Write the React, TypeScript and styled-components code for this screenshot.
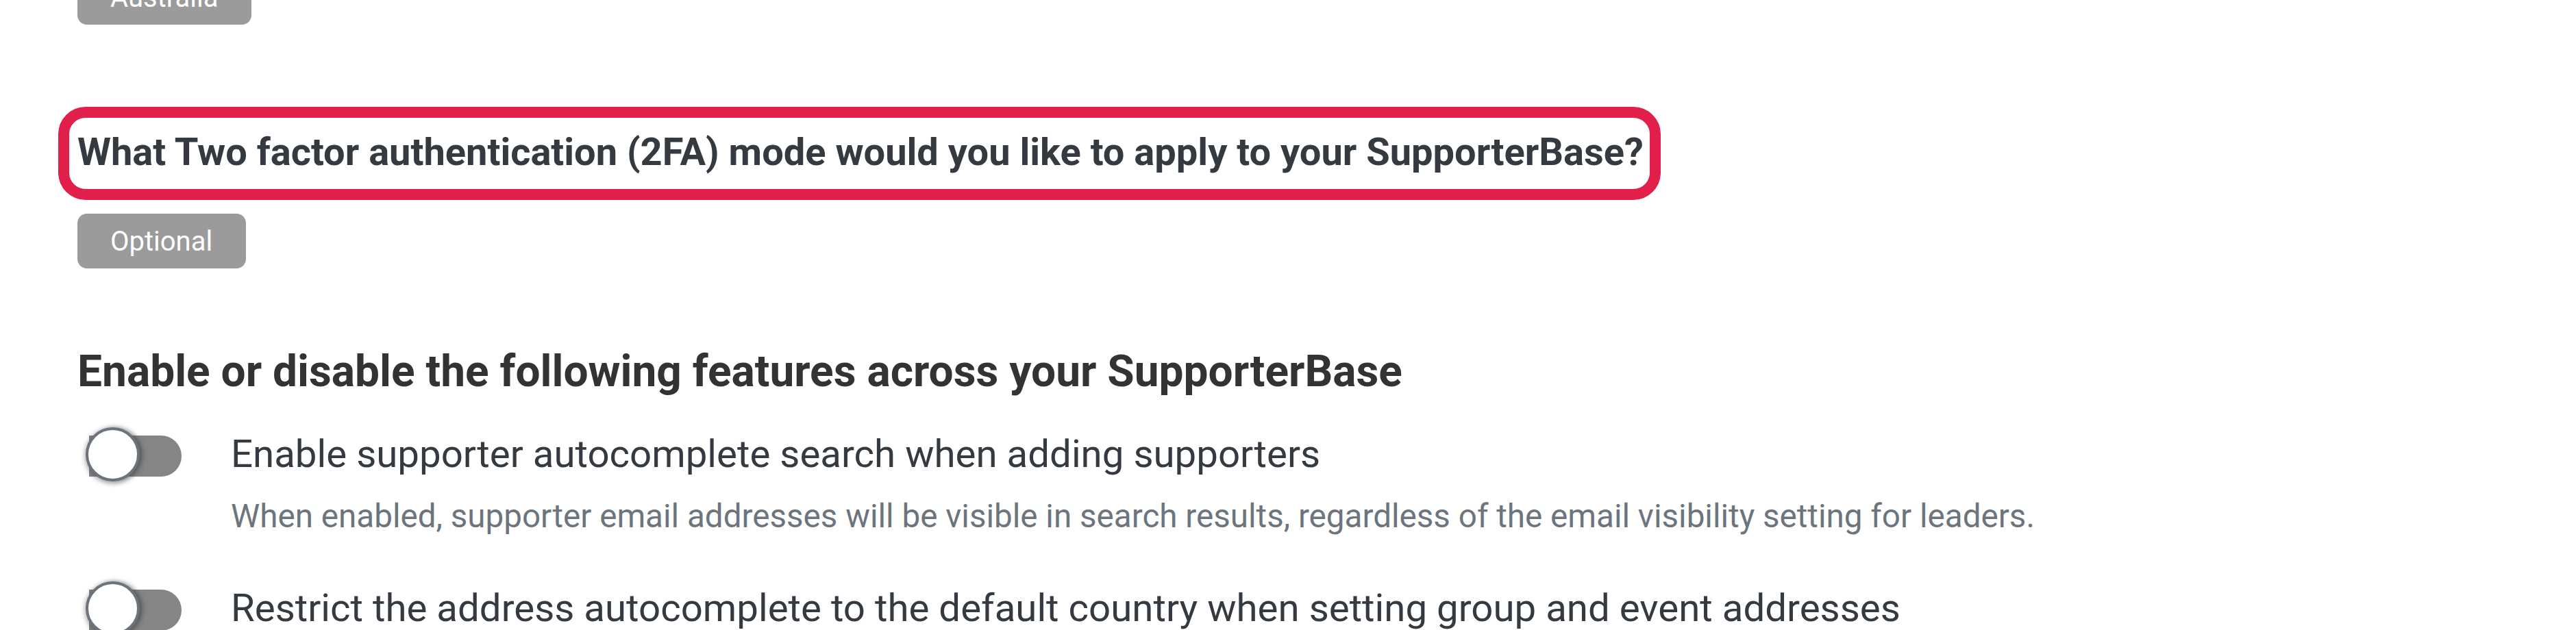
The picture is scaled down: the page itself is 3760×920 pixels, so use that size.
import React from "react";
import styled, { createGlobalStyle } from "styled-components";

const GlobalStyle = createGlobalStyle`
  html, body {
    margin: 0;
    padding: 0;
    background: #ffffff;
  }
  body {
    font-family: Roboto, "Liberation Sans", Arial, sans-serif;
    color: #343a40;
    overflow: hidden;
  }
  * { box-sizing: border-box; }
`;

const Page = styled.main`
  display: flex;
  flex-direction: column;
  align-items: flex-start;
  padding-left: 113px;
  margin-top: -44px;
`;

const Chip = styled.span<{ $gap?: number }>`
  display: inline-flex;
  align-items: center;
  height: 80px;
  padding: 0 49px 0 48px;
  border-radius: 14px;
  background: #9a9b9a;
  color: #ffffff;
  font-size: 40px;
  font-weight: 400;
  margin-top: ${(p) => p.$gap ?? 0}px;
`;

const Question = styled.h5`
  display: inline-block;
  margin: 120px 0 0 -28px;
  padding: 17px 9px 20px 12px;
  border: 16px solid #e21f4a;
  border-radius: 40px;
  font-size: 56px;
  line-height: 1.2;
  font-weight: 700;
  color: #343a40;
`;

const SectionTitle = styled.h4`
  margin: 113px 0 0;
  font-size: 64px;
  line-height: 1.2;
  font-weight: 700;
  color: #333333;
`;

const FeatureList = styled.div`
  display: flex;
  flex-direction: column;
  gap: 66px;
  margin-top: 42px;
`;

const Feature = styled.div`
  display: grid;
  grid-template-columns: 152px 1fr;
  column-gap: 72px;
  row-gap: 23px;
  align-items: center;
`;

const Switch = styled.span`
  position: relative;
  display: block;
  width: 152px;
  height: 79px;
`;

const Track = styled.span`
  position: absolute;
  left: 17px;
  top: 12px;
  width: 135px;
  height: 60px;
  border-radius: 0 30px 30px 0;
  background: #858585;
`;

const Knob = styled.span`
  position: absolute;
  left: 12px;
  top: 0;
  width: 79px;
  height: 79px;
  border-radius: 50%;
  background: #ffffff;
  border: 4px solid #6c737a;
  box-shadow: 0 2px 6px 2px rgba(60, 64, 70, 0.35), 4px 0 6px rgba(40, 44, 48, 0.35);
`;

const Label = styled.div`
  font-size: 56.4px;
  line-height: 1.2;
  font-weight: 400;
  color: #343a40;
  white-space: nowrap;
`;

const Hint = styled.div`
  grid-column: 2;
  font-size: 47.6px;
  line-height: 1.2;
  font-weight: 400;
  color: #6c757d;
  white-space: nowrap;
`;

type FeatureItem = { label: string; hint?: string };

const features: FeatureItem[] = [
  {
    label: "Enable supporter autocomplete search when adding supporters",
    hint:
      "When enabled, supporter email addresses will be visible in search results, regardless of the email visibility setting for leaders.",
  },
  {
    label:
      "Restrict the address autocomplete to the default country when setting group and event addresses",
  },
];

export default function App() {
  return (
    <>
      <GlobalStyle />
      <Page>
        <Chip>Australia</Chip>
        <Question>
          What Two factor authentication (2FA) mode would you like to apply to your SupporterBase?
        </Question>
        <Chip $gap={20}>Optional</Chip>
        <SectionTitle>Enable or disable the following features across your SupporterBase</SectionTitle>
        <FeatureList>
          {features.map((f) => (
            <Feature key={f.label}>
              <Switch role="switch" aria-checked={false}>
                <Track />
                <Knob />
              </Switch>
              <Label>{f.label}</Label>
              {f.hint && <Hint>{f.hint}</Hint>}
            </Feature>
          ))}
        </FeatureList>
      </Page>
    </>
  );
}
